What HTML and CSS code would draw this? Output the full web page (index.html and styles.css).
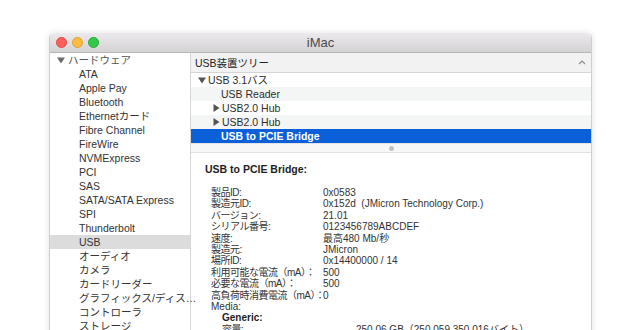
FILE: index.html
```html
<!DOCTYPE html>
<html>
<head>
    <title>iMac</title>
    <link rel="stylesheet" href="styles.css">
</head>
<body>
    <div class="window">
        <div class="titlebar">
            <div class="lights">
                <span class="light red"></span>
                <span class="light yellow"></span>
                <span class="light green"></span>
            </div>
            <div class="title">iMac</div>
        </div>

        <div class="main">
            <ul class="sidebar">
                <li class="group"><svg class="tri" width="8" height="7" viewBox="0 0 8 7"><path d="M0 0.5 H8 L4 6.5 Z" fill="#6a6a6a"/></svg>ハードウェア</li>
                <li>ATA</li>
                <li>Apple Pay</li>
                <li>Bluetooth</li>
                <li>Ethernetカード</li>
                <li>Fibre Channel</li>
                <li>FireWire</li>
                <li>NVMExpress</li>
                <li>PCI</li>
                <li>SAS</li>
                <li>SATA/SATA Express</li>
                <li>SPI</li>
                <li>Thunderbolt</li>
                <li class="selected">USB</li>
                <li>オーディオ</li>
                <li>カメラ</li>
                <li>カードリーダー</li>
                <li>グラフィックス/ディス…</li>
                <li>コントローラ</li>
                <li>ストレージ</li>
            </ul>

            <div class="content">
                <div class="header">
                    <span>USB装置ツリー</span>
                    <svg class="caret" width="8" height="5" viewBox="0 0 8 5"><path d="M1 4 L4 1 L7 4" fill="none" stroke="#8a8a8a" stroke-width="1.1"/></svg>
                </div>

                <ul class="tree">
                    <li class="lvl1"><svg class="tri" width="8" height="7" viewBox="0 0 8 7"><path d="M0 0.5 H8 L4 6.5 Z" fill="#555"/></svg>USB 3.1バス</li>
                    <li class="lvl2 alt">USB Reader</li>
                    <li class="lvl2 has-tri"><svg class="tri" width="7" height="8" viewBox="0 0 7 8"><path d="M0.5 0 V8 L6.5 4 Z" fill="#555"/></svg>USB2.0 Hub</li>
                    <li class="lvl2 has-tri alt"><svg class="tri" width="7" height="8" viewBox="0 0 7 8"><path d="M0.5 0 V8 L6.5 4 Z" fill="#555"/></svg>USB2.0 Hub</li>
                    <li class="lvl2 selected">USB to PCIE Bridge</li>
                </ul>

                <div class="splitter"><span class="dot"></span></div>

                <div class="details">
                    <h2>USB to PCIE Bridge:</h2>
                    <div class="props">
                        <span class="k">製品ID:</span><span>0x0583</span>
                        <span class="k">製造元ID:</span><span>0x152d &nbsp;(JMicron Technology Corp.)</span>
                        <span class="k">バージョン:</span><span>21.01</span>
                        <span class="k">シリアル番号:</span><span>0123456789ABCDEF</span>
                        <span class="k">速度:</span><span>最高480 Mb/秒</span>
                        <span class="k">製造元:</span><span>JMicron</span>
                        <span class="k">場所ID:</span><span>0x14400000 / 14</span>
                        <span class="k">利用可能な電流（mA）：</span><span>500</span>
                        <span class="k">必要な電流（mA）：</span><span>500</span>
                        <span class="k">高負荷時消費電流（mA）：</span><span>0</span>
                        <span class="full">Media:</span>
                        <span class="full sub">Generic:</span>
                    </div>
                    <div class="props media">
                        <span class="k">容量:</span><span>250.06 GB（250,059,350,016バイト）</span>
                    </div>
                </div>
            </div>
        </div>
    </div>
</body>
</html>
```

FILE: styles.css
```css
html, body { margin: 0; padding: 0; }
body { background: #fff; height: 330px; overflow: hidden; font-family: "Liberation Sans", "Noto Sans CJK JP", sans-serif; color: #2c2c2c; }
ul { list-style: none; margin: 0; padding: 0; }

.window { margin: 33px 0 0 49px; width: 541px; height: 420px; border: 1px solid #cfcfcf; border-top: none; border-radius: 5px 5px 0 0; box-shadow: 0 0 6px rgba(0,0,0,0.12); background: #fff; }

.titlebar { height: 19px; display: flex; align-items: center; position: relative; background: linear-gradient(#ebe9eb, #d4d2d4); border-bottom: 1px solid #b7b7b7; border-radius: 5px 5px 0 0; }
.lights { display: flex; gap: 5px; padding-left: 6px; }
.light { width: 11px; height: 11px; border-radius: 50%; box-sizing: border-box; }
.red { background: #fc605b; border: 1px solid #de4a45; }
.yellow { background: #fdbc40; border: 1px solid #dea033; }
.green { background: #34c84a; border: 1px solid #27aa36; }
.title { position: absolute; left: 0; right: 0; text-align: center; font-size: 13px; color: #4a4a4a; }

.main { display: flex; }

.sidebar { width: 140px; border-right: 1px solid #d6d6d6; font-size: 10.5px; color: #333; }
.sidebar li { height: 14px; line-height: 14px; padding-left: 29px; white-space: nowrap; display: flex; align-items: center; }
.sidebar li.group { padding-left: 7px; color: #555; }
.sidebar .tri { margin-right: 3px; }
.sidebar li.selected { background: #dcdcdc; }

.content { flex: 1; }

.header { height: 19px; display: flex; align-items: center; justify-content: space-between; padding: 0 5px 0 4px; background: #f2f2f2; border-bottom: 1px solid #d6d6d6; font-size: 10.5px; color: #222; }

.tree { font-size: 10.5px; color: #2c2c2c; }
.tree li { height: 14px; line-height: 14px; white-space: nowrap; display: flex; align-items: center; }
.tree li.alt { background: #f4f5f5; }
.tree .tri { margin-right: 2px; }
.tree .lvl1 { padding-left: 7px; }
.tree .lvl2 { padding-left: 30px; }
.tree .lvl2.has-tri { padding-left: 22px; }
.tree li.selected { background: #0b5fd8; color: #fff; font-weight: bold; }

.splitter { height: 8px; display: flex; align-items: center; justify-content: center; background: #f7f7f7; border-top: 1px solid #e2e2e2; border-bottom: 1px solid #e2e2e2; }
.dot { width: 5px; height: 5px; border-radius: 50%; background: #c2c2c2; }

.details { padding: 10px 0 0 14px; font-size: 10px; color: #333; }
.details h2 { margin: 0 0 12px; font-size: 10.5px; font-weight: bold; color: #1e1e1e; line-height: 12px; }
.props { display: grid; grid-template-columns: 112px auto; line-height: 11.4px; padding-left: 6px; white-space: nowrap; }
.props .k { letter-spacing: -0.5px; }
.props .full { grid-column: 1 / 3; }
.props .sub { padding-left: 11px; font-weight: bold; color: #1e1e1e; }
.props.media { padding-left: 17px; grid-template-columns: 134px auto; }
```
